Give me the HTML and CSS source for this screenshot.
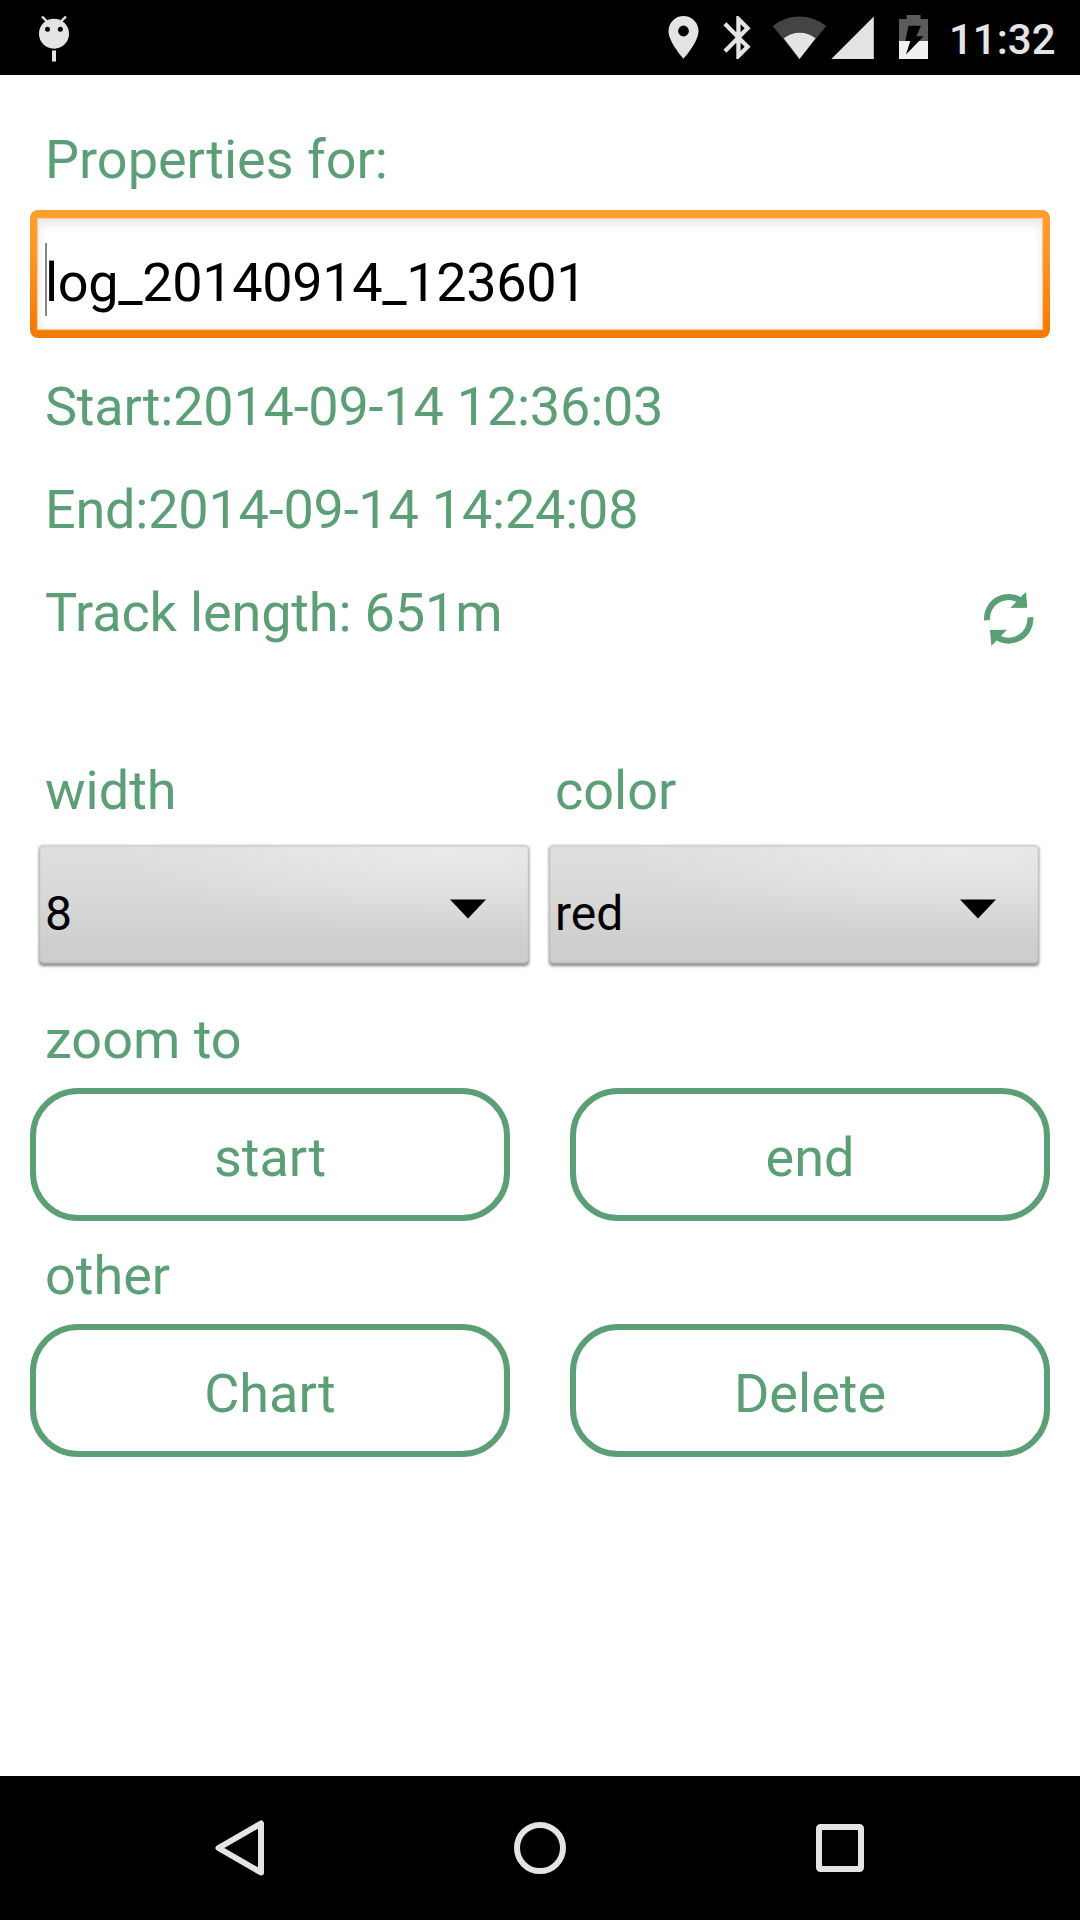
FILE: index.html
```html
<!DOCTYPE html>
<html lang="en">
<head>
<meta charset="utf-8">
<title>Track properties</title>
<link rel="stylesheet" href="styles.css">
</head>
<body>
<header class="status-bar">
  <svg class="icon-debug" viewBox="38 0 32 75" width="32" height="75">
    <path d="M42 16.5l5 5M66 16.5l-5 5" stroke="#e4e4e4" stroke-width="2.4"/>
    <circle cx="54" cy="33.7" r="15" fill="#e4e4e4"/>
    <circle cx="47.5" cy="29.3" r="2.5"/><circle cx="60.3" cy="29.3" r="2.5"/>
    <path d="M52 50.5h4v11h-4z" fill="#e4e4e4"/>
  </svg>
  <div class="status-right">
    <svg viewBox="668 0 31 75" width="31" height="75">
      <path fill="#e4e4e4" fill-rule="evenodd" d="M683.5 16a15 15 0 0 0-15 15c0 11.200 15 27.700 15 27.700s15-16.500 15-27.700a15 15 0 0 0-15-15zm0 9.600a5.400 5.400 0 1 1 0 10.800a5.400 5.400 0 0 1 0-10.800z"/>
    </svg>
    <svg class="icon-bluetooth" viewBox="723 0 28 75" width="28" height="75">
      <path fill="#e4e4e4" fill-rule="evenodd" d="M736.300 16h2.100l12.200 12.200-9.300 9.300 9.300 9.300L738.400 59h-2.100V42.800l-9.900 9.900-3-3 12.100-12.200-12.100-12.200 3-3 9.900 9.900zM740.600 24.200v8l4-4zM740.600 42.800v8l4-4z"/>
    </svg>
    <svg class="icon-wifi" viewBox="772 0 54 75" width="54" height="75">
      <path fill="#444" d="M772.700 26a42.500 42.500 0 0 1 53.600 0L799.500 59z"/>
      <path fill="#e4e4e4" d="M783.800 38.300a25.500 25.500 0 0 1 31.800 0L799.500 59z"/>
    </svg>
    <svg class="icon-signal" viewBox="831 0 43 75" width="43" height="75">
      <path fill="#e4e4e4" d="M873.800 16.500V59h-42.500z"/>
    </svg>
    <svg class="icon-battery" viewBox="899 0 29 75" width="29" height="75">
      <path fill="#5b5b5b" d="M899 19h7.500v-4h14v4h7.500v22h-29z"/>
      <path fill="#efefef" d="M899 41h29v18h-29z"/>
      <path d="M908.500 25.700h12.500l-4.700 10.600h7.300L906 54.500l4.300-13.500h-5z"/>
    </svg>
    <span class="clock">11:32</span>
  </div>
</header>

<main class="page">
  <label class="label">Properties for:</label>
  <div class="input"><div class="input-field"><span class="caret"></span><span class="input-text">log_20140914_123601</span></div></div>

  <section class="info">
    <div class="label date">Start:2014-09-14 12:36:03</div>
    <div class="label date">End:2014-09-14 14:24:08</div>
    <div class="info-row">
      <div class="label length">Track length: 651m</div>
      <svg class="refresh" viewBox="60 60 180 180" width="60" height="60">
        <g fill="none" stroke="#5c9f76" stroke-width="18">
          <path d="M81 151A65 65 0 0 1 182 92"/>
          <path d="M211 142A65 65 0 0 1 110 201"/>
        </g>
        <path fill="#5c9f76" d="M198 65l4 48-51 1zM94 228l-4-48 51-1z"/>
      </svg>
    </div>
  </section>

  <section class="selects">
    <div class="select-group">
      <div class="label">width</div>
      <div class="select"><span>8</span><svg class="arrow" viewBox="0 0 36 20" width="36" height="20"><path d="M0 .5h36L18 19.500z"/></svg></div>
    </div>
    <div class="select-group">
      <div class="label">color</div>
      <div class="select"><span>red</span><svg class="arrow" viewBox="0 0 36 20" width="36" height="20"><path d="M0 .5h36L18 19.500z"/></svg></div>
    </div>
  </section>

  <section class="actions">
    <div class="label action-label">zoom to</div>
    <div class="buttons"><button class="button">start</button><button class="button">end</button></div>
  </section>
  <section class="actions">
    <div class="label action-label">other</div>
    <div class="buttons"><button class="button">Chart</button><button class="button">Delete</button></div>
  </section>
</main>

<nav class="nav-bar">
  <svg viewBox="210 1816 60 64" width="60" height="64"><path d="M261 1823.500v49L218.500 1848z" fill="none" stroke="#e4e4e4" stroke-width="6" stroke-linejoin="round"/></svg>
  <svg viewBox="510 1816 60 64" width="60" height="64"><circle cx="540" cy="1848" r="23" fill="none" stroke="#e4e4e4" stroke-width="6"/></svg>
  <svg viewBox="810 1816 60 64" width="60" height="64"><rect x="819" y="1827" width="42" height="42" rx="1.500" fill="none" stroke="#e4e4e4" stroke-width="6"/></svg>
</nav>
</body>
</html>
```
FILE: styles.css
```css
* { box-sizing: border-box; }

body {
  margin: 0;
  width: 1080px;
  height: 1920px;
  display: flex;
  flex-direction: column;
  overflow: hidden;
  background: #fff;
  color: #5c9f76;
  font-family: Roboto, sans-serif;
  font-size: 54px;
}

svg { display: block; flex: none; }

.status-bar {
  flex: none;
  height: 75px;
  padding: 0 24px 0 38px;
  display: flex;
  justify-content: space-between;
  background: #000;
}

.status-right { display: flex; }
.icon-bluetooth { margin-left: 24px; }
.icon-wifi { margin-left: 21px; overflow: visible; }
.icon-signal { margin-left: 5px; }
.icon-battery { margin-left: 25px; }

.clock {
  width: 107px;
  margin-left: 21px;
  padding-top: 2px;
  line-height: 75px;
  font-size: 42px;
  font-weight: 500;
  color: #e4e4e4;
  white-space: nowrap;
}

.page {
  flex: 1;
  padding: 33px 30px 0;
}

.label {
  display: block;
  height: 103px;
  padding-left: 15px;
  line-height: 103px;
  white-space: nowrap;
}

/* Focused text field: orange frame around a softly inset white field. */
.input {
  height: 128px;
  margin-top: -1px;
  padding: 9px 8px;
  border-radius: 8px;
  background: linear-gradient(#ff9e2e, #fb9627 35%, #f47b08 90%);
}

.input-field {
  display: flex;
  align-items: center;
  height: 110px;
  padding: 11px 0 0 7px;
  background: #fff;
  box-shadow: inset 0 9px 14px -5px #e6e6e6, inset 0 0 9px #eee, 0 0 1px 1px #fcc88c;
  color: #000;
  line-height: 74px;
}

.input-text {
  padding-top: 6px;
  letter-spacing: -.35px;
}

.caret {
  width: 2px;
  height: 73px;
  margin-right: -2px;
  background: #888;
}

.info { padding-top: 17px; }
.date { letter-spacing: -.22px; }
.length { letter-spacing: -.15px; }

.info-row {
  display: flex;
  justify-content: space-between;
  padding-right: 10px;
}

.refresh { margin-top: 29px; }

.selects {
  display: flex;
  gap: 20px;
  margin-top: 75px;
  padding-left: 9px;
}

.select-group { width: 490px; }
.select-group .label { padding-left: 6px; }

.select {
  display: flex;
  justify-content: space-between;
  height: 120px;
  margin-top: 3px;
  padding: 0 43px 0 6px;
  border-radius: 4px;
  background:
    radial-gradient(ellipse 330px 90px at 83% 0, rgba(255, 255, 255, .4), transparent),
    linear-gradient(#dedede, #dadada 35%, #cecece 85%, #cdcdcd);
  box-shadow: inset 0 2px 1px #d4d4d4, inset 0 -2px 2px #999, inset 0 0 2px #aaa, 0 1px 3px rgba(0, 0, 0, .5);
  color: #000;
  font-size: 48px;
  line-height: 56px;
}

.select span { padding-top: 41px; }
.arrow { margin-top: 54px; }

.actions { margin-top: 6px; }
.selects + .actions { margin-top: 26px; }

.action-label { height: 97px; line-height: 97px; }

.buttons {
  display: flex;
  gap: 60px;
}

.button {
  width: 480px;
  height: 133px;
  padding: 5px 0 0;
  border: 6px solid #5c9f76;
  border-radius: 48px;
  background: none;
  color: inherit;
  font: inherit;
}

.nav-bar {
  flex: none;
  height: 144px;
  display: flex;
  justify-content: center;
  align-items: center;
  gap: 240px;
  background: #000;
}
```
